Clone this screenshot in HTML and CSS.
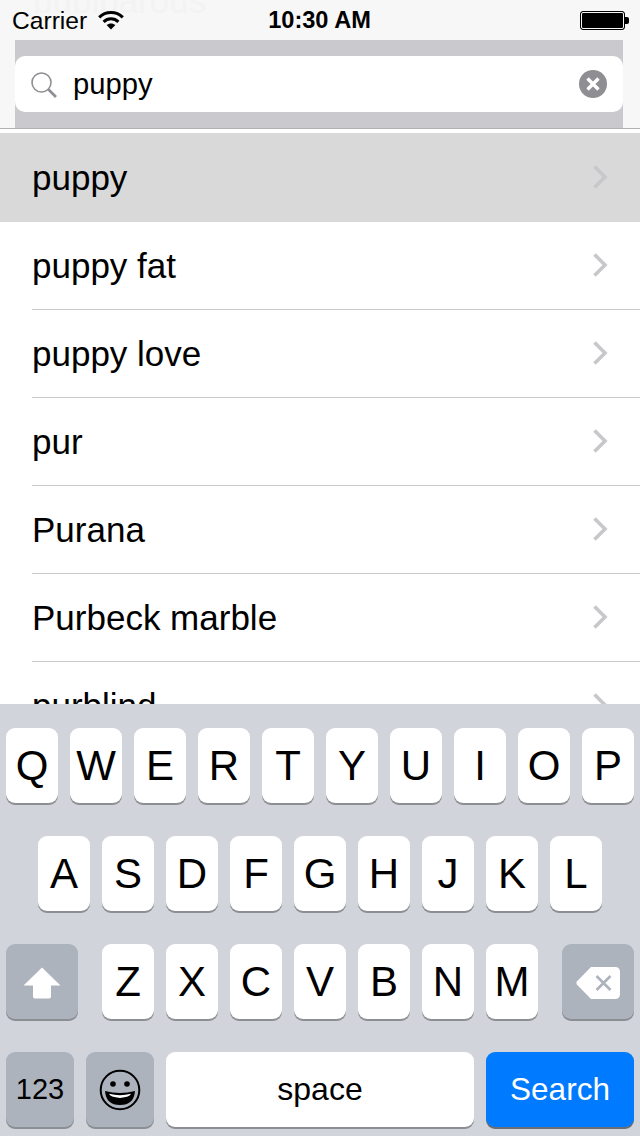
FILE: index.html
```html
<!DOCTYPE html>
<html lang="en">
<head>
    <meta charset="UTF-8">
    <meta name="viewport" content="width=device-width, initial-scale=1.0">
    <title>Search</title>
    <link rel="stylesheet" href="styles.css">
</head>
<body>
    <div class="page">
        <div class="status-bar">
            <div class="ghost-clip"><span class="ghost-text">pupiparous</span></div>
            <div class="status-left">
                <span class="carrier">Carrier</span>
                <svg class="wifi" width="26" height="20" viewBox="0 0 26 20">
                    <path d="M1.2 7.4C7.7 1 18.3 1 24.8 7.4" fill="none" stroke="#000" stroke-width="3"/>
                    <path d="M5.6 11.8C9.8 7.8 16.2 7.8 20.4 11.8" fill="none" stroke="#000" stroke-width="3"/>
                    <path d="M13 19.5L8.6 15C11.2 12.9 14.8 12.9 17.4 15Z" fill="#000"/>
                </svg>
            </div>
            <span class="time">10:30 AM</span>
            <div class="battery"><div class="battery-body"></div><div class="battery-tip"></div></div>
        </div>

        <div class="search-bar">
            <div class="search-field">
                <svg class="search-icon" width="28" height="28" viewBox="0 0 28 28">
                    <circle cx="11.5" cy="11.5" r="9.5" fill="none" stroke="#8e8e93" stroke-width="1.6"/>
                    <path d="M18.5 18.5L26 26" fill="none" stroke="#8e8e93" stroke-width="2.6"/>
                </svg>
                <span class="search-text">puppy</span>
                <svg class="clear-icon" width="28" height="28" viewBox="0 0 28 28">
                    <circle cx="14" cy="14" r="14" fill="#8e8e93"/>
                    <path d="M8.5 8.5L19.5 19.5M19.5 8.5L8.5 19.5" fill="none" stroke="#fff" stroke-width="3.4"/>
                </svg>
            </div>
        </div>
        <div class="bar-line"></div>

        <ul class="results">
            <li class="result selected"><span>puppy</span><svg class="chevron" width="16" height="26" viewBox="0 0 16 26"><path d="M2.5 2.5L13 13L2.5 23.5" fill="none" stroke="#c7c7cc" stroke-width="3.6"/></svg></li>
            <li class="result"><span>puppy fat</span><svg class="chevron" width="16" height="26" viewBox="0 0 16 26"><path d="M2.5 2.5L13 13L2.5 23.5" fill="none" stroke="#c7c7cc" stroke-width="3.6"/></svg></li>
            <li class="result"><span>puppy love</span><svg class="chevron" width="16" height="26" viewBox="0 0 16 26"><path d="M2.5 2.5L13 13L2.5 23.5" fill="none" stroke="#c7c7cc" stroke-width="3.6"/></svg></li>
            <li class="result"><span>pur</span><svg class="chevron" width="16" height="26" viewBox="0 0 16 26"><path d="M2.5 2.5L13 13L2.5 23.5" fill="none" stroke="#c7c7cc" stroke-width="3.6"/></svg></li>
            <li class="result"><span>Purana</span><svg class="chevron" width="16" height="26" viewBox="0 0 16 26"><path d="M2.5 2.5L13 13L2.5 23.5" fill="none" stroke="#c7c7cc" stroke-width="3.6"/></svg></li>
            <li class="result"><span>Purbeck marble</span><svg class="chevron" width="16" height="26" viewBox="0 0 16 26"><path d="M2.5 2.5L13 13L2.5 23.5" fill="none" stroke="#c7c7cc" stroke-width="3.6"/></svg></li>
            <li class="result"><span>purblind</span><svg class="chevron" width="16" height="26" viewBox="0 0 16 26"><path d="M2.5 2.5L13 13L2.5 23.5" fill="none" stroke="#c7c7cc" stroke-width="3.6"/></svg></li>
        </ul>

        <div class="keyboard">
            <div class="key-row">
                <div class="key">Q</div><div class="key">W</div><div class="key">E</div><div class="key">R</div><div class="key">T</div>
                <div class="key">Y</div><div class="key">U</div><div class="key">I</div><div class="key">O</div><div class="key">P</div>
            </div>
            <div class="key-row">
                <div class="key">A</div><div class="key">S</div><div class="key">D</div><div class="key">F</div><div class="key">G</div>
                <div class="key">H</div><div class="key">J</div><div class="key">K</div><div class="key">L</div>
            </div>
            <div class="key-row row-third">
                <div class="key key-dark key-shift">
                    <svg class="key-icon" width="38" height="32" viewBox="0 0 38 32">
                        <path d="M19 0.5L37.5 18.5H28V29.5Q28 31.5 26 31.5H12Q10 31.5 10 29.5V18.5H0.5Z" fill="#fff"/>
                    </svg>
                </div>
                <div class="letters">
                    <div class="key">Z</div><div class="key">X</div><div class="key">C</div><div class="key">V</div>
                    <div class="key">B</div><div class="key">N</div><div class="key">M</div>
                </div>
                <div class="key key-dark key-shift">
                    <svg class="key-icon" width="44" height="32" viewBox="0 0 44 32">
                        <path d="M15 0H39Q44 0 44 5V27Q44 32 39 32H15L0.8 17.5Q0 16 0.8 14.5Z" fill="#fff"/>
                        <path d="M20.5 9L34.5 23M34.5 9L20.5 23" fill="none" stroke="#adb3bd" stroke-width="2.6"/>
                    </svg>
                </div>
            </div>
            <div class="key-row row-bottom">
                <div class="key key-dark key-num">123</div>
                <div class="key key-dark key-num">
                    <svg width="42" height="42" viewBox="0 0 42 42">
                        <circle cx="21" cy="21" r="19.3" fill="none" stroke="#000" stroke-width="2"/>
                        <circle cx="14" cy="15" r="2.8" fill="#000"/>
                        <circle cx="28" cy="15" r="2.8" fill="#000"/>
                        <path d="M6 22Q21 26 36 22Q35 36 21 36Q7 36 6 22Z" fill="#000"/>
                        <path d="M10 24.8Q21 27.5 32 24.8Q31 28 21 29Q11 28 10 24.8Z" fill="#fff"/>
                    </svg>
                </div>
                <div class="key key-space">space</div>
                <div class="key key-search">Search</div>
            </div>
        </div>
    </div>
</body>
</html>
```

FILE: styles.css
```css
* {
    box-sizing: border-box;
}
body {
    margin: 0;
    font-family: 'Liberation Sans', Arial, sans-serif;
    color: #000;
}
.page {
    width: 640px;
    height: 1136px;
    display: flex;
    flex-direction: column;
    overflow: hidden;
    background-color: #fff;
}

/* status bar */
.status-bar {
    position: relative;
    height: 40px;
    flex-shrink: 0;
    display: grid;
    grid-template-columns: 1fr auto 1fr;
    align-items: center;
    padding: 1px 11px 0 12px;
    background-color: #f7f7f7;
}
.ghost-clip {
    position: absolute;
    left: 33px;
    top: 0;
    height: 14px;
    overflow: hidden;
}
.ghost-text {
    display: block;
    margin-top: -19px;
    font-size: 35px;
    color: #f3f3f3;
}
.status-left {
    position: relative;
    display: flex;
    align-items: center;
    gap: 11px;
}
.carrier {
    font-size: 24.6px;
}
.wifi {
    margin-top: -2px;
}
.time {
    position: relative;
    margin-right: 2px;
    font-size: 23.6px;
    font-weight: bold;
}
.battery {
    display: flex;
    align-items: center;
    justify-content: flex-end;
}
.battery-body {
    width: 45px;
    height: 19px;
    background-color: #000;
    border: 1px solid #000;
    outline: 1px solid #f7f7f7;
    outline-offset: -2px;
    border-radius: 3px;
}
.battery-tip {
    width: 4px;
    height: 7px;
    background-color: #000;
    border-radius: 0 2px 2px 0;
}

/* search */
.search-bar {
    height: 88px;
    flex-shrink: 0;
    padding: 16px 17px 16px 15px;
    background-color: #f7f7f7;
    position: relative;
}
.search-bar::before {
    content: "";
    position: absolute;
    left: 15px;
    right: 17px;
    top: 0;
    bottom: 0;
    background-color: #c9c9ce;
}
.search-field {
    position: relative;
    height: 56px;
    display: flex;
    align-items: center;
    padding: 0 16px 0 15px;
    background-color: #fff;
    border-radius: 10px;
}
.search-icon {
    flex-shrink: 0;
    margin-right: 15px;
    margin-top: 2px;
}
.search-text {
    flex: 1;
    font-size: 29.2px;
}
.bar-line {
    height: 1px;
    flex-shrink: 0;
    background-color: #b2b2b2;
}

/* results */
.results {
    list-style: none;
    margin: 0;
    padding: 4px 0 0;
    flex: 1;
    overflow: hidden;
}
.result {
    position: relative;
    height: 88px;
    display: flex;
    align-items: center;
    justify-content: space-between;
    padding: 0 32px;
    font-size: 35px;
}
.result::after {
    content: "";
    position: absolute;
    left: 32px;
    right: 0;
    bottom: 0;
    height: 1px;
    background-color: #c8c7cc;
}
.result.selected {
    height: 89px;
    padding-top: 1px;
    background-color: #d9d9d9;
}
.result.selected::after {
    display: none;
}
.chevron {
    margin-bottom: 3px;
}

/* keyboard */
.keyboard {
    height: 432px;
    flex-shrink: 0;
    position: relative;
    display: flex;
    flex-direction: column;
    gap: 33px;
    padding-top: 24px;
    background-color: #d1d5db;
}
.key-row {
    display: flex;
    justify-content: center;
    gap: 12px;
}
.row-third {
    justify-content: space-between;
    padding: 0 6px;
}
.letters {
    display: flex;
    gap: 12px;
}
.row-bottom {
    justify-content: flex-start;
    padding: 0 6px;
}
.key {
    width: 52px;
    height: 75px;
    display: flex;
    align-items: center;
    justify-content: center;
    font-size: 42px;
    background-color: #fff;
    border-radius: 9px;
    box-shadow: 0 2px 0 #8b8e93;
}
.key-dark {
    background-color: #adb3bd;
}
.key-shift {
    width: 72px;
}
.key-icon {
    margin-top: 2px;
}
.key-num {
    width: 68px;
    font-size: 29px;
}
.key-space {
    width: 308px;
    font-size: 32px;
}
.key-search {
    width: 148px;
    font-size: 31.5px;
    color: #fff;
    background-color: #007aff;
    box-shadow: 0 2px 0 #6b6e73;
}
```
